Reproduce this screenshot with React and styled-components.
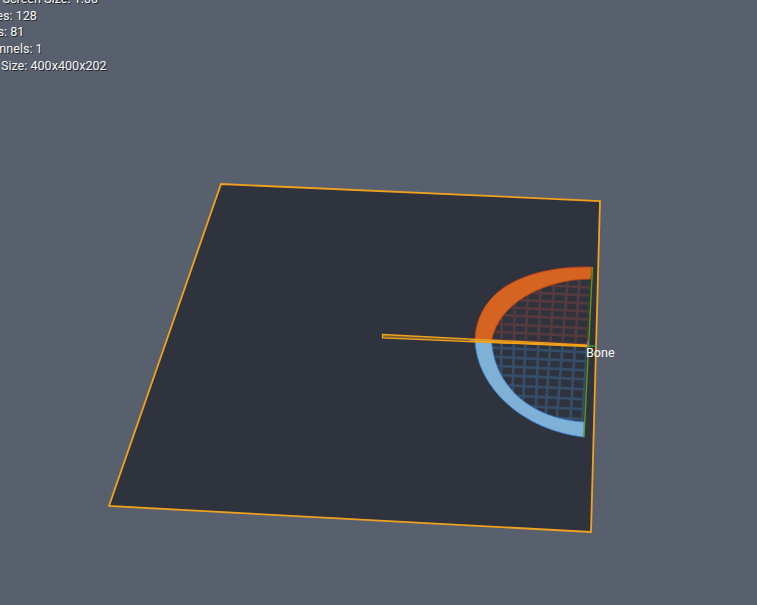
import React from 'react'
import styled, { createGlobalStyle } from 'styled-components'

const GlobalStyle = createGlobalStyle`
  html, body {
    margin: 0;
    height: 100%;
    overflow: hidden;
    background: #585f6d;
  }
`

const Viewport = styled.div`
  position: relative;
  width: 757px;
  height: 605px;
  overflow: hidden;
  background: #585f6d;
  font-family: Roboto, "Liberation Sans", sans-serif;
`

const Scene = styled.svg`
  display: block;
  width: 757px;
  height: 605px;
`

const Stats = styled.div`
  position: absolute;
  top: -25.6px;
  left: -42px;
  display: flex;
  flex-direction: column;
`

const StatLine = styled.div`
  height: 16.7px;
  line-height: 16.7px;
  font-size: 12.6px;
  white-space: nowrap;
  color: #f4f4f4;
  text-shadow: 1px 1px 0 rgba(0, 0, 0, 0.6);
`

const BoneLabel = styled.div`
  position: absolute;
  left: 586px;
  top: 345px;
  font-size: 12.6px;
  line-height: 16px;
  color: #f8f8f8;
`

const stats = [
  'LOD: 0',
  'Current Screen Size: 1.00',
  'Triangles: 128',
  'Vertices: 81',
  'UV Channels: 1',
  'Approx Size: 400x400x202',
]

const redInner = 'M590 279 C 545 279 498 303 491.5 341 L 587 346 Z'
const blueInner = 'M491.5 341 C 494 385 530 419 584 422 L 587 346 Z'

// x of each grid line at y=300 and at y=378
const gridXs = [
  [502, 501],
  [515, 513],
  [527.5, 524],
  [540, 537],
  [553, 548],
  [566, 560],
  [578, 573],
  [590, 585],
]
const gridYs = [287, 295, 303, 311, 319, 328, 336, 344, 352, 361, 370, 379, 389, 399, 409, 419]

const Grid = ({ id, d, color }) => (
  <>
    <clipPath id={id}>
      <path d={d} />
    </clipPath>
    <g clipPath={`url(#${id})`} stroke={color} strokeWidth="2.7" fill="none">
      {gridXs.map(([a, b]) => (
        <polyline
          key={a}
          points={`${a + (a - b) * 0.5},261 ${a},300 ${b},378 ${b - (a - b) * 0.8},440`}
        />
      ))}
      {gridYs.map(y => (
        <line key={y} x1="480" y1={y - 5} x2="600" y2={y + 1} />
      ))}
    </g>
  </>
)

const Arm = () => (
  <>
    <Grid id="red-grid" d={redInner} color="#553a3d" />
    <Grid id="blue-grid" d={blueInner} color="#364d68" />
    <path
      d="M592 267 C 525 266 477 290 475 340 L 491.5 341 C 498 303 545 279 590.5 279 Z"
      fill="#d4641f"
      stroke="#c8401a"
      strokeWidth="0.8"
    />
    <path
      d="M475 340 C 477 388 523 430 584 437 L 584 422 C 530 419 494 385 491.5 341 Z"
      fill="#7fb1d7"
      stroke="#3d86e2"
      strokeWidth="0.8"
    />
    <line x1="592.5" y1="267" x2="584" y2="437" stroke="#5c9c10" strokeWidth="1.4" />
  </>
)

export default function App() {
  return (
    <Viewport>
      <GlobalStyle />
      <Scene viewBox="0 0 757 605">
        <polygon
          points="221,184 600,201 591,532 109,506"
          fill="#2f333d"
          stroke="#f0a21e"
          strokeWidth="1.8"
        />
        <Arm />
        <polygon
          points="382.5,334.5 587,345 587,346.5 382.5,338"
          fill="rgba(240,162,30,0.4)"
          stroke="#f0a21e"
          strokeWidth="1.3"
        />
        <line x1="470" y1="341" x2="587" y2="345.8" stroke="#f5a313" strokeWidth="1.6" />
        <line x1="588" y1="346" x2="597" y2="346" stroke="#40c040" strokeWidth="1" />
        <line x1="587.5" y1="346" x2="587.5" y2="341" stroke="#a050d0" strokeWidth="1" />
      </Scene>
      <Stats>
        {stats.map(line => (
          <StatLine key={line}>{line}</StatLine>
        ))}
      </Stats>
      <BoneLabel>Bone</BoneLabel>
    </Viewport>
  )
}
